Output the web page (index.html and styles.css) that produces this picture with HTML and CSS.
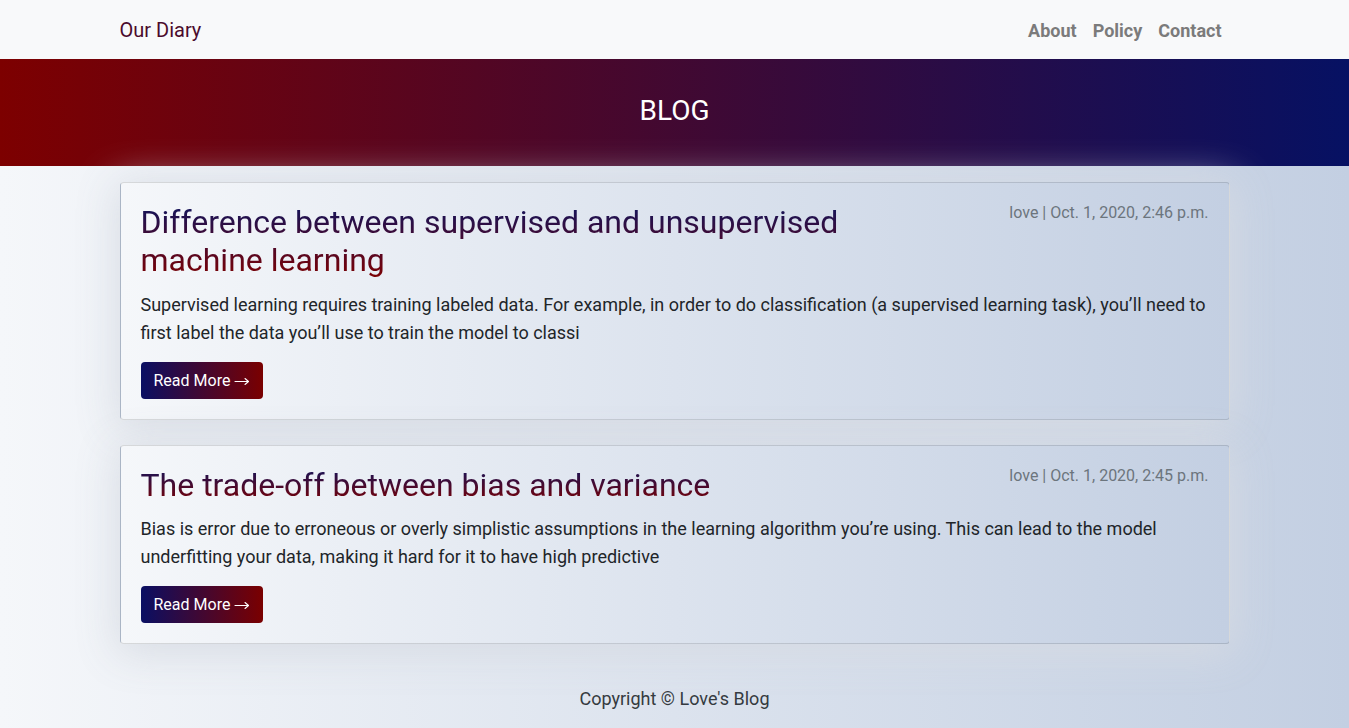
FILE: index.html
```html
<!DOCTYPE html>
<html lang="en">
<head>
<meta charset="utf-8">
<title>Our Diary</title>
<link rel="stylesheet" href="styles.css">
</head>
<body>
<nav class="navbar">
  <div class="container nav-inner">
    <a class="brand" href="#">Our Diary</a>
    <ul class="nav-links">
      <li><a href="#">About</a></li>
      <li><a href="#">Policy</a></li>
      <li><a href="#">Contact</a></li>
    </ul>
  </div>
</nav>
<header class="hero">
  <h1>BLOG</h1>
</header>
<main class="container posts">
  <article class="card">
    <div class="card-head">
      <h2 class="post-title">Difference between supervised and unsupervised machine learning</h2>
      <p class="meta">love | Oct. 1, 2020, 2:46 p.m.</p>
    </div>
    <p class="excerpt">Supervised learning requires training labeled data. For example, in order to do classification (a supervised learning task), you’ll need to first label the data you’ll use to train the model to classi</p>
    <a class="btn" href="#">Read More <svg class="arrow" width="16" height="10" viewBox="0 0 16 10" aria-hidden="true"><path d="M1 5.5H14.5M11 2.5L14.5 5.5L11 8.5" fill="none" stroke="#fff" stroke-width="1.1" stroke-linecap="round" stroke-linejoin="round"/></svg></a>
  </article>
  <article class="card">
    <div class="card-head">
      <h2 class="post-title">The trade-off between bias and variance</h2>
      <p class="meta">love | Oct. 1, 2020, 2:45 p.m.</p>
    </div>
    <p class="excerpt">Bias is error due to erroneous or overly simplistic assumptions in the learning algorithm you’re using. This can lead to the model underfitting your data, making it hard for it to have high predictive</p>
    <a class="btn" href="#">Read More <svg class="arrow" width="16" height="10" viewBox="0 0 16 10" aria-hidden="true"><path d="M1 5.5H14.5M11 2.5L14.5 5.5L11 8.5" fill="none" stroke="#fff" stroke-width="1.1" stroke-linecap="round" stroke-linejoin="round"/></svg></a>
  </article>
</main>
<footer class="footer">
  <p>Copyright © Love's Blog</p>
</footer>
</body>
</html>
```

FILE: styles.css
```css
* { box-sizing: border-box; }
html, body { margin: 0; padding: 0; }
body {
  font-family: Roboto, "Noto Sans", "Liberation Sans", sans-serif;
  font-size: 16px;
  line-height: 1.5;
  color: #212529;
  min-height: 100vh;
  background: linear-gradient(to right, #f5f7fa, #c3cfe2) fixed;
}
a { text-decoration: none; }
.container {
  width: 1110px;
  margin: 0 auto;
}
.navbar {
  background: #f8f9fa;
  height: 59px;
}
.nav-inner {
  height: 100%;
  display: flex;
  align-items: center;
  justify-content: space-between;
}
.brand {
  font-size: 20px;
  color: #4b0b2c;
  line-height: 30px;
}
.nav-links {
  list-style: none;
  margin: 0;
  padding: 0;
  display: flex;
  position: relative;
  top: 1px;
}
.nav-links a {
  display: block;
  padding: 8px 8px;
  font-size: 18px;
  font-weight: 700;
  color: #7b7b7b;
}
.hero {
  height: 107px;
  padding-bottom: 4px;
  background: linear-gradient(to right, #7d0000, #061163);
  display: flex;
  align-items: center;
  justify-content: center;
}
.hero h1 {
  margin: 0;
  color: #fff;
  font-size: 28px;
  font-weight: 400;
  line-height: 1;
}
.posts {
  padding-top: 16px;
}
.card {
  position: relative;
  border: 1px solid rgba(0, 0, 0, 0.125);
  border-radius: 4px;
  padding: 20px;
  margin-bottom: 25px;
  background: linear-gradient(to right, #f5f7fa, #c3cfe2);
  box-shadow: 0 6px 40px 4px rgba(214, 218, 226, 0.9);
}
.card-head {
  display: flex;
  justify-content: space-between;
  gap: 30px;
}
.post-title {
  flex: 0 0 703px;
  margin: 0 0 11px;
  font-size: 32px;
  font-weight: 400;
  line-height: 1.2;
  background: linear-gradient(to bottom, #0e145e, #800000);
  -webkit-background-clip: text;
  background-clip: text;
  color: transparent;
  width: fit-content;
}
.meta {
  margin: 0;
  font-size: 16px;
  line-height: 19px;
  color: #6c757d;
  text-align: right;
}
.excerpt {
  margin: 0 0 15px;
  font-size: 18px;
  line-height: 28px;
  color: #212529;
}
.btn {
  display: inline-block;
  padding: 6px 13px;
  height: 37px;
  line-height: 25px;
  font-size: 16px;
  color: #fff;
  border-radius: 4px;
  background: linear-gradient(to right, #0a0f63, #7a0000);
}
.arrow {
  vertical-align: middle;
  position: relative;
  top: -1px;
}
.footer {
  text-align: center;
  padding-top: 16px;
}
.footer p {
  margin: 0;
  font-size: 18px;
  line-height: 27px;
  color: #343a40;
}
```
